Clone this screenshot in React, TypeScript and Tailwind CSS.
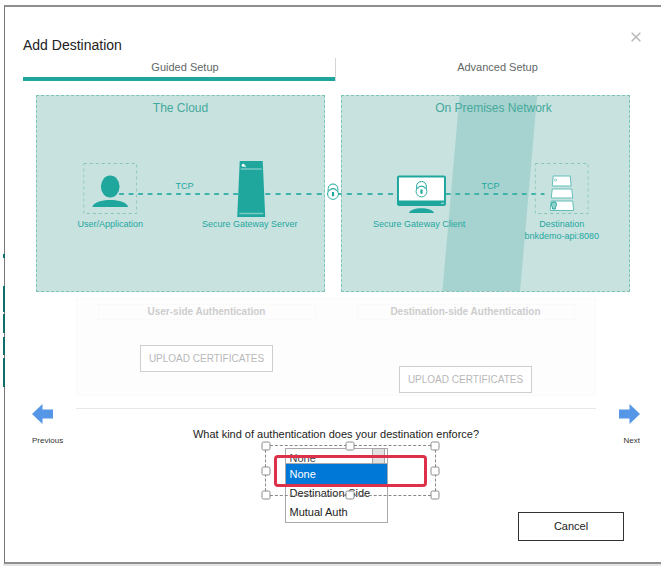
import React from "react";

const TEAL = "#1fa79e";

function Lock() {
  return (
    <g stroke={TEAL} fill="none">
      <path d="M-4.800 -1V-4.500a4.800 4.500 0 0 1 9.600 0v3.500" strokeWidth="1" />
      <circle cx="0" cy="1" r="5.400" fill="#fff" strokeWidth="0.900" />
      <path d="M-3.500 -1.800a3.600 3.200 0 0 1 7 0" strokeWidth="0.700" />
      <path d="M0 -1v4.200" strokeWidth="2.200" />
    </g>
  );
}

function UserIcon() {
  return (
    <svg width="54" height="56" viewBox="0 0 54 56" aria-hidden="true">
      <rect x="0.500" y="2.500" width="53" height="50" fill="none" stroke="#86c4b4" strokeDasharray="3 3" />
      <ellipse cx="27" cy="25.500" rx="9.300" ry="11" fill={TEAL} />
      <path d="M9 46C11 36.500 43 36.500 45 46Z" fill={TEAL} />
    </svg>
  );
}

function ServerIcon() {
  return (
    <svg width="54" height="56" viewBox="0 0 54 56" aria-hidden="true">
      <path d="M16.500 0H39.500L42 56H14Z" fill={TEAL} />
      <path d="M17.500 8H38.500M16 52.500H40" stroke="#79c9c3" strokeWidth="1.300" />
      <circle cx="20" cy="4.300" r="1.500" fill="#fff" />
      <circle cx="22" cy="5.300" r="0.900" fill="#cdeae8" />
    </svg>
  );
}

function MonitorIcon() {
  return (
    <svg width="54" height="56" viewBox="0 0 54 56" aria-hidden="true">
      <rect x="5" y="14.500" width="49" height="30.500" rx="2" fill={TEAL} />
      <rect x="7" y="16.500" width="45" height="23" fill="#fff" />
      <path d="M49 42.300h3" stroke="#9ad6d2" strokeWidth="1.200" />
      <path d="M17 52C18 45.500 41 45.500 42 52Z" fill={TEAL} />
      <g transform="translate(29.500 29.500)">
        <Lock />
      </g>
    </svg>
  );
}

function DestinationIcon() {
  return (
    <svg width="54" height="56" viewBox="0 0 54 56" aria-hidden="true">
      <rect x="0.500" y="2.500" width="53" height="50" fill="none" stroke="#86c4b4" strokeDasharray="3 3" />
      <g fill="#fff" stroke="#62bfb8" strokeWidth="1" strokeLinejoin="round">
        <path d="M18.500 15H35.500L36.500 25H17.500Z" />
        <path d="M17.500 28H37L38 37H16.500Z" />
        <path d="M16.500 40H38L39 49.500H15.500Z" />
      </g>
      <circle cx="20.800" cy="19" r="1.200" fill="none" stroke="#7cc8c2" strokeWidth="0.800" />
      <path d="M16.500 43.500a2.700 2.700 0 0 1 5.400 0c0 1.800-1.400 2-1.400 4.500h-2.600c0-2.500-1.400-2.700-1.400-4.500Z" fill="#8fd0cb" stroke={TEAL} />
    </svg>
  );
}

function Node({ place, icon, lines }: { place: string; icon: React.ReactNode; lines: string[] }) {
  return (
    <div className={`absolute top-[66px] flex -translate-x-1/2 flex-col items-center gap-px ${place}`}>
      {icon}
      <div className="text-center text-[9px] leading-3 whitespace-nowrap text-[#1fa79e]">
        {lines.map((l) => (
          <p key={l}>{l}</p>
        ))}
      </div>
    </div>
  );
}

function Topology() {
  return (
    <section className="relative mx-[31px] mt-[14px] grid h-[197px] grid-cols-2 gap-4">
      <div className="relative border border-dashed border-[#7cc4b6] bg-[#c8e2e0] pt-1">
        <h2 className="text-center text-xs leading-4 text-[#45a99b]">The Cloud</h2>
      </div>
      <div className="relative border border-dashed border-[#7cc4b6] bg-[#c8e2e0] pt-1">
        <div className="absolute inset-y-0 left-[35%] w-[33%] bg-[#a6d3cf] [clip-path:polygon(18%_0,100%_0,82%_100%,0_100%)]" />
        <h2 className="relative pl-4 text-center text-xs leading-4 text-[#45a99b]">On Premises Network</h2>
      </div>

      <svg className="absolute inset-0 h-full w-full" aria-hidden="true">
        <g stroke="#3fb3ab" strokeWidth="2">
          <line x1="14%" x2="34.500%" y1="99" y2="99" strokeDasharray="4.800 4.700" />
          <line x1="38.600%" x2="49.300%" y1="99" y2="99" strokeDasharray="5 5.300" />
          <line x1="50.600%" x2="61%" y1="99" y2="99" strokeDasharray="5 5.300" />
          <line x1="69%" x2="85.600%" y1="99" y2="99" strokeDasharray="4.800 4.700" />
        </g>
      </svg>
      <svg className="absolute top-[87px] left-1/2 -translate-x-1/2" width="16" height="20" viewBox="-8 -11 16 20" aria-hidden="true">
        <Lock />
      </svg>
      <span className="absolute top-[85px] left-[25%] -translate-x-1/2 text-[9px] leading-3 text-[#1fa79e]">TCP</span>
      <span className="absolute top-[85px] left-[76.5%] -translate-x-1/2 text-[9px] leading-3 text-[#1fa79e]">TCP</span>

      <Node place="left-[12.5%]" icon={<UserIcon />} lines={["User/Application"]} />
      <Node place="left-[36%]" icon={<ServerIcon />} lines={["Secure Gateway Server"]} />
      <Node place="left-[64.5%]" icon={<MonitorIcon />} lines={["Secure Gateway Client"]} />
      <Node place="left-[88.5%]" icon={<DestinationIcon />} lines={["Destination", "bnkdemo-api:8080"]} />
    </section>
  );
}

function AuthColumn({ title, spaced }: { title: string; spaced?: boolean }) {
  return (
    <div className="flex flex-col items-center pt-[5px]">
      <h3 className="w-[218px] border border-dotted border-[#f6f6f6] text-center text-[10px] leading-[14px] font-bold text-[#cdcdcd]">
        {title}
      </h3>
      <button
        type="button"
        className={`h-[27px] w-[133px] border border-[#cfcfcf] bg-white text-[10px] text-[#b8b8b8] ${spaced ? "mt-[46px]" : "mt-[25px]"}`}
      >
        UPLOAD CERTIFICATES
      </button>
    </div>
  );
}

const HANDLES = [
  "left-0 top-0",
  "left-1/2 top-0",
  "left-full top-0",
  "left-0 top-1/2",
  "left-full top-1/2",
  "left-0 top-full",
  "left-1/2 top-full",
  "left-full top-full",
];

function AuthSelect() {
  return (
    <div className="relative mt-[5px] w-[103px]">
      <select
        id="auth-kind"
        defaultValue="none"
        className="block h-4 w-full appearance-none border border-[#aaa] bg-white px-1 pt-[3px] text-[11px] leading-3 text-[#444]"
      >
        <option value="none">None</option>
        <option value="destination">Destination-Side</option>
        <option value="mutual">Mutual Auth</option>
      </select>
      <span className="pointer-events-none absolute top-0 right-[3px] flex h-4 w-[13px] items-center justify-center border border-[#a5a5a5] bg-[#e1e1e1]">
        <svg width="5" height="3" viewBox="0 0 5 3" aria-hidden="true">
          <path d="M0.500 0.500L2.500 2.500L4.500 0.500" fill="none" stroke="#999" />
        </svg>
      </span>
      <ul
        role="listbox"
        aria-label="Authentication options"
        className="absolute top-full left-0 w-full border border-t-0 border-[#a9a9a9] bg-white text-[11px] leading-[19px] text-[#222]"
      >
        <li role="option" aria-selected="true" className="bg-[#0078d7] px-1 pt-px text-white">None</li>
        <li role="option" aria-selected="false" className="px-1">Destination-Side</li>
        <li role="option" aria-selected="false" className="px-1">Mutual Auth</li>
      </ul>
      <div className="pointer-events-none absolute -top-[3px] -left-5 h-[51px] w-[171px] border border-dashed border-[#888]">
        <div className="absolute top-[9px] left-2 h-8 w-[153px] rounded-sm border-[3px] border-[#dc3148]" />
        {HANDLES.map((h) => (
          <span
            key={h}
            className={`absolute size-[9px] -translate-x-1/2 -translate-y-1/2 rounded-[2px] border border-[#8c8c8c] bg-white ${h}`}
          />
        ))}
      </div>
    </div>
  );
}

function StepButton({ label, next }: { label: string; next?: boolean }) {
  return (
    <button type="button" className={`flex w-11 flex-col gap-[11px] ${next ? "items-end" : "items-start"}`}>
      <svg width="21" height="20" viewBox="0 0 21 20" className={next ? "" : "rotate-180"} aria-hidden="true">
        <path d="M0 5.500H10.500V0L21 10L10.500 20V14.500H0Z" fill="#5596e6" />
      </svg>
      <span className="text-[8px] leading-3 text-[#333]">{label}</span>
    </button>
  );
}

function BackdropSlivers() {
  return (
    <div className="absolute top-[247px] -left-0.5 w-0.5" aria-hidden="true">
      <div className="h-1 bg-[#0f6e69]" />
      <div className="mt-7 h-[26px] bg-[#0f6e69]" />
      <div className="mt-0.5 h-[19px] bg-[#0f6e69]" />
      <div className="mt-1 h-[18px] bg-[#0f6e69]" />
      <div className="mt-[3px] h-[29px] bg-[#0f6e69]" />
    </div>
  );
}

export default function App() {
  return (
    <div className="flex min-h-screen flex-col bg-white pt-[5px] pl-1 font-['Liberation_Sans',Arial,sans-serif]">
      <main role="dialog" aria-labelledby="dialog-title" className="relative border-y-2 border-l border-y-[#8f8f8f] border-l-[#777] bg-white pb-[21px]">
        <BackdropSlivers />
        <header className="flex h-[51px] items-start justify-between pr-5 pl-[18px]">
          <h1 id="dialog-title" className="pt-7 text-sm leading-5 text-[#222]">Add Destination</h1>
          <button type="button" aria-label="Close" className="mt-[25px]">
            <svg width="10" height="10" viewBox="0 0 10 10" aria-hidden="true">
              <path d="M0.700 0.700L9.300 9.300M9.300 0.700L0.700 9.300" stroke="#b8b8b8" strokeWidth="1.500" />
            </svg>
          </button>
        </header>

        <div role="tablist" className="mr-[14px] ml-[18px] grid grid-cols-2 text-[11px] leading-[19px] text-[#5f6868]">
          <button type="button" role="tab" aria-selected="true" className="border-b-4 border-[#1fa79e] pl-3">
            Guided Setup
          </button>
          <button type="button" role="tab" aria-selected="false" className="border-l border-[#d5d5d5] pb-1 pl-3">
            Advanced Setup
          </button>
        </div>

        <Topology />

        <section className="mr-[65px] ml-[71px] mt-1.5 grid h-[98px] grid-cols-2 border border-[#fafafa] bg-[#fdfdfd]">
          <AuthColumn title="User-side Authentication" />
          <AuthColumn title="Destination-side Authentication" spaced />
        </section>

        <div className="mt-2 flex items-start pr-[21px] pl-[27px]">
          <StepButton label="Previous" />
          <div className="mt-1 flex flex-1 flex-col items-center border-t border-[#e8e8e8] pt-4">
            <label htmlFor="auth-kind" className="text-[11px] leading-[18px] text-[#222]">
              What kind of authentication does your destination enforce?
            </label>
            <AuthSelect />
          </div>
          <StepButton label="Next" next />
        </div>

        <footer className="mt-12 flex justify-end pr-[37px]">
          <button type="button" className="h-[29px] w-[106px] border border-[#333] bg-white text-[11px] text-[#222]">
            Cancel
          </button>
        </footer>
      </main>
      <div className="-ml-px min-h-[3px] flex-1 bg-[#e5e5e5]" />
    </div>
  );
}
